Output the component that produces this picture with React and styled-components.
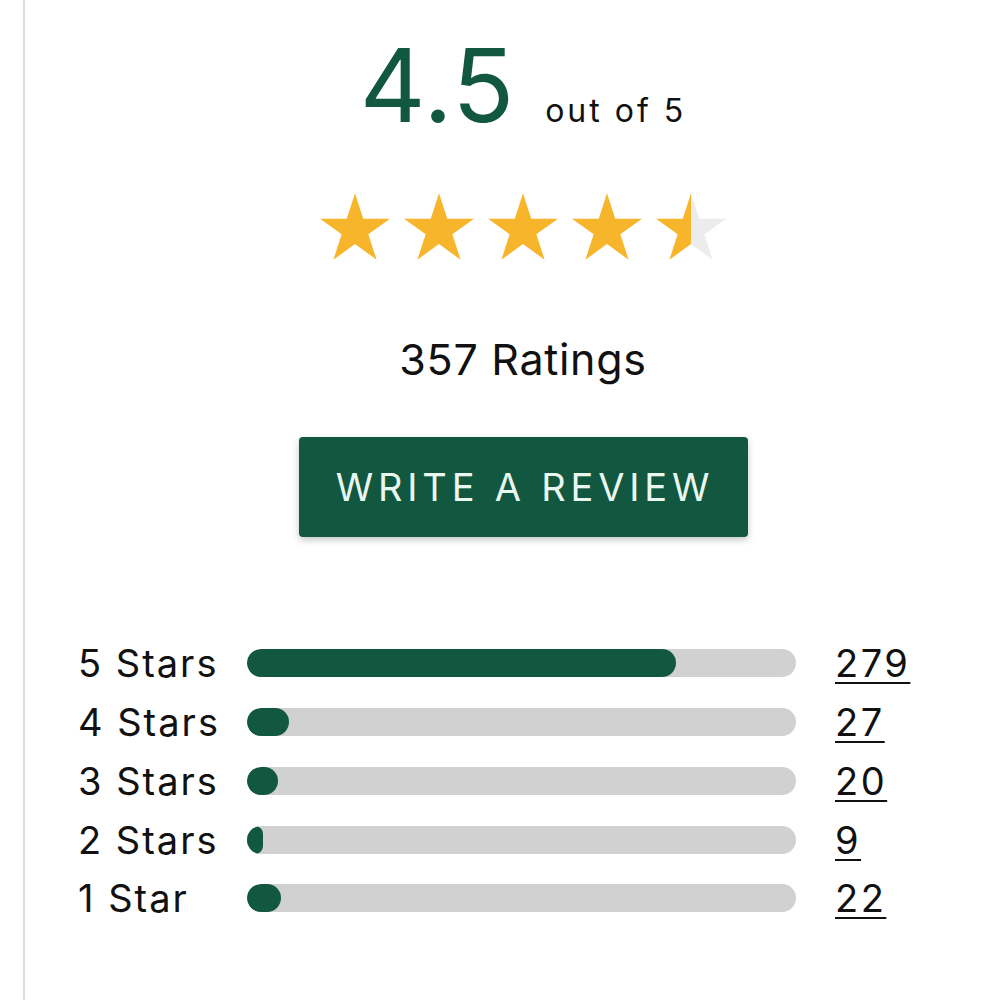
import React from "react";
import styled, { createGlobalStyle } from "styled-components";

const GlobalStyle = createGlobalStyle`
  html, body {
    margin: 0;
    padding: 0;
    background: #ffffff;
    overflow: hidden;
  }
  body {
    font-family: "Inter", "Noto Sans", sans-serif;
    color: #111111;
  }
`;

const GREEN = "#12573f";

const Card = styled.div`
  box-sizing: border-box;
  width: 998px;
  min-height: 1000px;
  margin-left: 23px;
  border-left: 2px solid #dcdcdc;
  padding: 34px 0 0 0;
  display: flex;
  flex-direction: column;
  align-items: center;
`;

const Headline = styled.div`
  display: flex;
  align-items: baseline;
  justify-content: center;
  gap: 30px;
`;

const Score = styled.span`
  font-size: 102px;
  line-height: 1;
  font-weight: 400;
  letter-spacing: 1px;
  color: ${GREEN};
`;

const OutOf = styled.span`
  font-size: 32px;
  line-height: 1;
  letter-spacing: 3px;
  color: #111111;
`;

const StarRow = styled.div`
  display: flex;
  gap: 14px;
  margin-top: 57px;
`;

const RatingCount = styled.div`
  font-size: 43px;
  line-height: 1;
  letter-spacing: 0.7px;
  margin-top: 78px;
  color: #111111;
`;

const ReviewButton = styled.button`
  margin-top: 56px;
  width: 449px;
  height: 100px;
  border: none;
  border-radius: 4px;
  background: ${GREEN};
  color: #eaf7f0;
  font-family: "Inter", "Noto Sans", sans-serif;
  font-size: 38px;
  letter-spacing: 4.8px;
  padding: 0 0 0 4px;
  box-shadow: 0 3px 7px rgba(0, 0, 0, 0.22);
  cursor: pointer;
`;

const Breakdown = styled.div`
  align-self: flex-start;
  margin: 97px 0 0 53px;
  display: grid;
  grid-template-columns: 130px 549px auto;
  grid-auto-rows: 58.75px;
  column-gap: 39px;
  align-items: center;
`;

const Label = styled.span`
  font-size: 38px;
  line-height: 1;
  letter-spacing: 2px;
  white-space: nowrap;
  color: #111111;
`;

const Track = styled.div`
  height: 28px;
  border-radius: 14px;
  background: #d1d1d1;
  overflow: hidden;
`;

const Fill = styled.div`
  height: 100%;
  border-radius: 14px;
  background: ${GREEN};
`;

const Count = styled.a`
  font-size: 38px;
  line-height: 1;
  letter-spacing: 2.5px;
  color: #111111;
  text-decoration: underline;
  text-decoration-thickness: 2px;
  text-underline-offset: 5px;
`;

const STAR_POINTS =
  "50,0 61.8,36.33 100,36.33 69.08,58.77 80.9,95.1 50,72.65 19.1,95.1 30.92,58.77 0,36.33 38.2,36.33";

const Star = ({ fill, id }) => (
  <svg width="70" height="67" viewBox="0 0 100 95.1">
    <defs>
      <linearGradient id={id} x1="0" x2="1" y1="0" y2="0">
        <stop offset={fill} stopColor="#f7b52b" />
        <stop offset={fill} stopColor="#ececec" />
      </linearGradient>
    </defs>
    <polygon points={STAR_POINTS} fill={`url(#${id})`} />
  </svg>
);

const rows = [
  { label: "5 Stars", count: 279 },
  { label: "4 Stars", count: 27 },
  { label: "3 Stars", count: 20 },
  { label: "2 Stars", count: 9 },
  { label: "1 Star", count: 22 },
];

const total = 357;
const rating = 4.5;

export default function App() {
  return (
    <>
      <GlobalStyle />
      <Card>
        <Headline>
          <Score>4.5</Score>
          <OutOf>out of 5</OutOf>
        </Headline>
        <StarRow>
          {[0, 1, 2, 3, 4].map((i) => (
            <Star
              key={i}
              id={`star-${i}`}
              fill={Math.max(0, Math.min(1, rating - i))}
            />
          ))}
        </StarRow>
        <RatingCount>{total} Ratings</RatingCount>
        <ReviewButton>WRITE A REVIEW</ReviewButton>
        <Breakdown>
          {rows.map((r) => (
            <React.Fragment key={r.label}>
              <Label>{r.label}</Label>
              <Track>
                <Fill
                  style={{
                    width: `max(${(r.count / total) * 100}%, 16px)`,
                  }}
                />
              </Track>
              <Count href="#">{r.count}</Count>
            </React.Fragment>
          ))}
        </Breakdown>
      </Card>
    </>
  );
}
